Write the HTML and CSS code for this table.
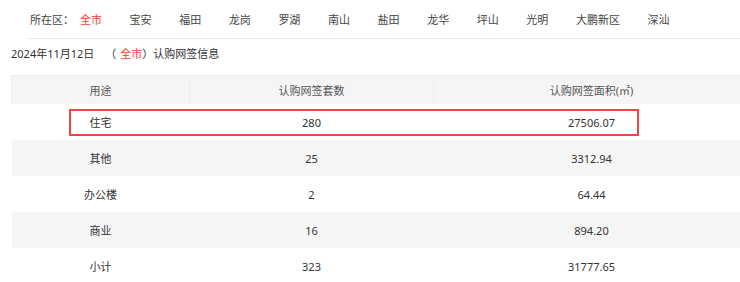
FILE: index.html
```html
<!DOCTYPE html>
<html lang="zh-CN">
<head>
<meta charset="utf-8">
<title>认购网签信息</title>
<link rel="stylesheet" href="styles.css">
</head>
<body>
<div class="nav">
  <span class="nav-label">所在区：</span>
  <a class="nav-item active">全市</a>
  <a class="nav-item">宝安</a>
  <a class="nav-item">福田</a>
  <a class="nav-item">龙岗</a>
  <a class="nav-item">罗湖</a>
  <a class="nav-item">南山</a>
  <a class="nav-item">盐田</a>
  <a class="nav-item">龙华</a>
  <a class="nav-item">坪山</a>
  <a class="nav-item">光明</a>
  <a class="nav-item">大鹏新区</a>
  <a class="nav-item">深汕</a>
</div>
<div class="title">2024年11月12日<span class="paren">（<span class="red">全市</span>）</span>认购网签信息</div>
<div class="data">
  <table class="tbl">
    <colgroup><col class="c1"><col class="c2"><col class="c3"></colgroup>
    <thead>
      <tr><th>用途</th><th>认购网签套数</th><th>认购网签面积(㎡)</th></tr>
    </thead>
    <tbody>
      <tr><td>住宅</td><td>280</td><td>27506.07</td></tr>
      <tr><td>其他</td><td>25</td><td>3312.94</td></tr>
      <tr><td>办公楼</td><td>2</td><td>64.44</td></tr>
      <tr><td>商业</td><td>16</td><td>894.20</td></tr>
      <tr><td>小计</td><td>323</td><td>31777.65</td></tr>
    </tbody>
  </table>
  <div class="highlight"></div>
</div>
</body>
</html>
```
FILE: styles.css
```css
html, body {
  margin: 0;
  padding: 0;
  overflow: hidden;
  background: #fff;
}
body {
  font-family: "Noto Sans", "Noto Sans CJK SC", sans-serif;
  color: #333;
}
.nav {
  display: flex;
  align-items: center;
  height: 38px;
  margin-left: 27px;
  padding-left: 3px;
  border-bottom: 1px solid #e8e8e8;
  font-size: 11px;
  color: #444;
  white-space: nowrap;
}
.nav-label {
  margin-right: 6px;
}
.nav-item {
  margin-right: 27.6px;
  color: #444;
}
.nav-item.active {
  color: #ff3a3a;
}
.title {
  height: 30px;
  line-height: 30px;
  margin-bottom: 6px;
  padding-left: 11px;
  font-size: 11px;
  color: #333;
  white-space: nowrap;
}
.paren {
  margin-left: 11px;
}
.red {
  color: #ff3a3a;
  padding-left: 4px;
}
.data {
  position: relative;
  margin-left: 11px;
  width: 738px;
}
.tbl {
  width: 738px;
  border-collapse: collapse;
  table-layout: fixed;
  font-size: 11px;
}
.c1 { width: 178px; }
.c2 { width: 244px; }
.c3 { width: 316px; }
.tbl th {
  height: 28px;
  padding: 0;
  font-weight: normal;
  color: #555;
  background: #f5f5f5;
  border: 1px solid #ececec;
  border-bottom: none;
}
.tbl td {
  height: 36px;
  padding: 0;
  text-align: center;
  color: #333;
}
.tbl tbody tr:nth-child(even) td {
  background: #f5f5f5;
}
.highlight {
  position: absolute;
  left: 58px;
  top: 34px;
  width: 566px;
  height: 23px;
  border: 2px solid #f04545;
}
```
